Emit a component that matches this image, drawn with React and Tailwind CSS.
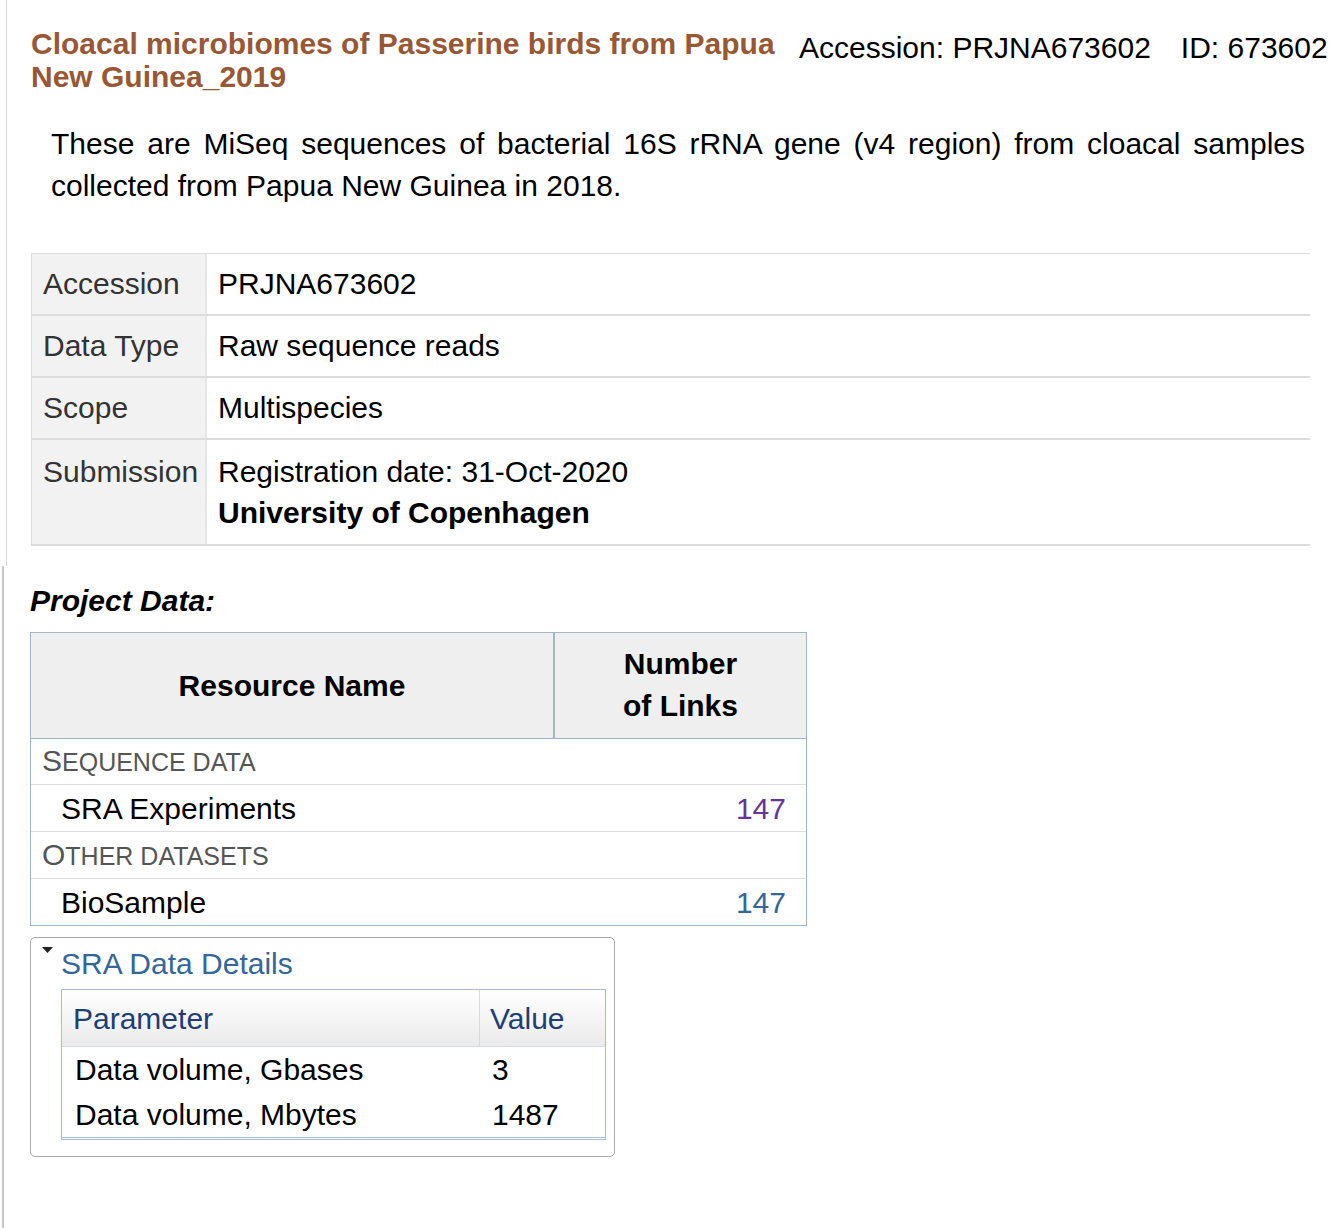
export default function App() {
  const info = [
    { label: 'Accession', value: 'PRJNA673602' },
    { label: 'Data Type', value: 'Raw sequence reads' },
    { label: 'Scope', value: 'Multispecies' },
  ];

  return (
    <div className="flex flex-col w-[1338px] h-[1228px] bg-white text-black font-['Liberation_Sans',Arial,sans-serif] text-[30px] overflow-hidden">
      {/* project header + summary */}
      <div className="ml-[6px] border-l border-[#d8d8d8] pl-[24px] pt-[27px] pb-[20px]">
        <div className="flex items-start">
          <h1 className="w-[762px] shrink-0 font-bold leading-[33px] text-[#985735]">
            Cloacal microbiomes of Passerine birds from Papua New Guinea_2019
          </h1>
          <div className="ml-[6px] mt-[4px] flex gap-[30px] leading-[34px] whitespace-nowrap">
            <span>Accession: PRJNA673602</span>
            <span>ID: 673602</span>
          </div>
        </div>

        <p className="ml-[20px] mt-[30px] w-[1254px] text-justify leading-[42px]">
          These are MiSeq sequences of bacterial 16S rRNA gene (v4 region) from cloacal samples collected from Papua New Guinea in 2018.
        </p>

        <div className="mt-[46px] w-[1279px] border-t border-l border-[#dddddd]">
          {info.map((row) => (
            <div key={row.label} className="flex border-b-2 border-[#dddddd]">
              <div className="w-[175px] shrink-0 bg-[#f2f2f2] border-r-2 border-[#e6e6e6] pl-[11px] py-[10px] leading-[40px] text-[#333333]">
                {row.label}
              </div>
              <div className="pl-[11px] py-[10px] leading-[40px]">{row.value}</div>
            </div>
          ))}
          <div className="flex border-b-2 border-[#dddddd]">
            <div className="w-[175px] shrink-0 bg-[#f2f2f2] border-r-2 border-[#e6e6e6] pl-[11px] pt-[11px] pb-[11px] leading-[41px] text-[#333333]">
              Submission
            </div>
            <div className="pl-[11px] pt-[11px] pb-[11px] leading-[41px]">
              <div>Registration date: 31-Oct-2020</div>
              <div className="font-bold">University of Copenhagen</div>
            </div>
          </div>
        </div>
      </div>

      {/* project data */}
      <div className="flex-1 ml-[2px] border-l-2 border-[#c8c8c8] pl-[26px] pt-[18px]">
        <h2 className="font-bold italic leading-[34px]">Project Data:</h2>

        <div className="mt-[14px] w-[777px] border border-[#9fb6cd]">
          <div className="flex bg-[#efefef] border-b border-[#9fb6cd] font-bold">
            <div className="w-[524px] shrink-0 flex items-center justify-center border-r-2 border-[#9fb6cd]">
              Resource Name
            </div>
            <div className="flex-1 text-center leading-[42px] pt-[10px] pb-[11px]">
              Number
              <br />
              of Links
            </div>
          </div>

          <div className="h-[46px] flex items-center pl-[11px] border-b border-[#dddddd] text-[#555555] uppercase">
            <span className="leading-[34px]">
              S<span className="text-[25px]">equence data</span>
            </span>
          </div>
          <div className="h-[47px] flex items-center justify-between pl-[30px] pr-[20px] border-b border-[#dddddd]">
            <span>SRA Experiments</span>
            <span className="text-[#663399]">147</span>
          </div>
          <div className="h-[47px] flex items-center pl-[11px] border-b border-[#dddddd] text-[#555555] uppercase">
            <span className="leading-[34px]">
              O<span className="text-[25px]">ther datasets</span>
            </span>
          </div>
          <div className="h-[46px] flex items-center justify-between pl-[30px] pr-[20px]">
            <span>BioSample</span>
            <span className="text-[#336699]">147</span>
          </div>
        </div>

        <div className="mt-[11px] w-[585px] border border-[#aaaaaa] rounded-[5px] pl-[30px] pr-[8px] pb-[16px]">
          <div className="relative h-[51px] flex items-center text-[#336699]">
            <svg className="absolute left-[-19px] top-[9px]" width="11" height="6" viewBox="0 0 11 6">
              <path d="M0 0 H11 L5.5 6 Z" fill="#222222" />
            </svg>
            SRA Data Details
          </div>
          <div className="border border-[#a8bdd3] border-b-0">
            <div className="flex h-[57px] items-center bg-linear-to-b from-white to-[#ebebeb] border-b border-[#d3dbe3] text-[#1d3f72]">
              <div className="w-[418px] shrink-0 pl-[11px] self-stretch flex items-center border-r border-[#d9d9d9]">
                Parameter
              </div>
              <div className="pl-[10px]">Value</div>
            </div>
            <div className="flex h-[45px] items-center">
              <div className="w-[418px] shrink-0 pl-[13px]">Data volume, Gbases</div>
              <div className="pl-[12px]">3</div>
            </div>
            <div className="flex h-[45px] items-center">
              <div className="w-[418px] shrink-0 pl-[13px]">Data volume, Mbytes</div>
              <div className="pl-[12px]">1487</div>
            </div>
            <div className="border-b-[3px] border-double border-[#a8bdd3]" />
          </div>
        </div>
      </div>
    </div>
  );
}
